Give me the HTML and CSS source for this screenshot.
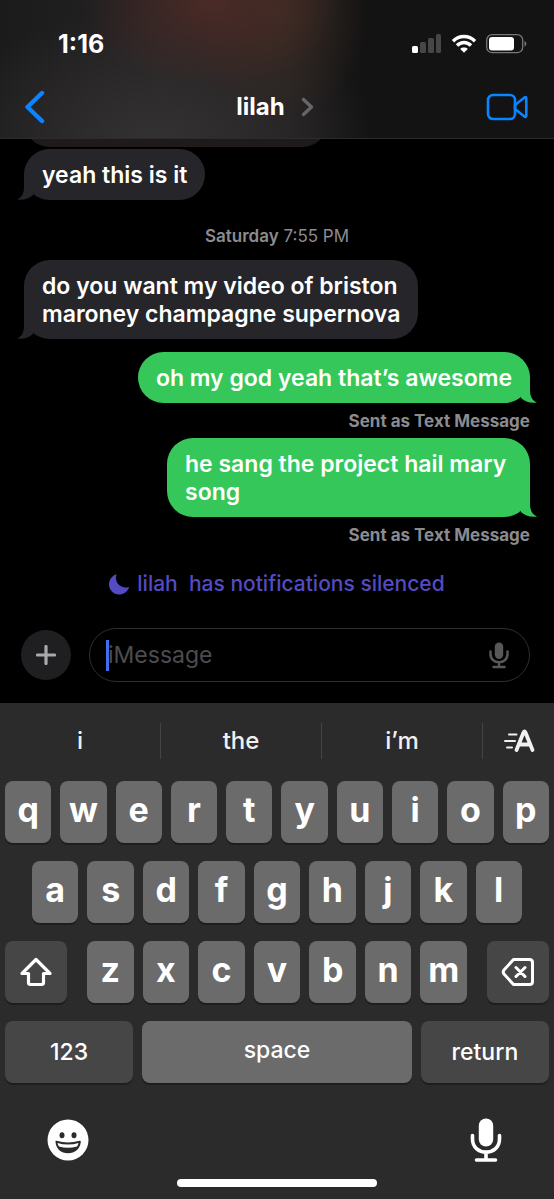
FILE: index.html
```
<!DOCTYPE html>
<html lang="en">
<head>
<meta charset="utf-8">
<meta name="viewport" content="width=device-width, initial-scale=1">
<title>lilah</title>
<link rel="stylesheet" href="styles.css">
</head>
<body>
<header class="header">
  <div class="status">
    <span class="clock">1:16</span>
    <div class="status-icons">
      <svg width="30" height="20" viewBox="0 0 30 20" aria-hidden="true">
        <rect x="0" y="12" width="6" height="7" rx="1.5" fill="#fff"/>
        <g fill="#464646"><rect x="8" y="8" width="6" height="11" rx="1.5"/><rect x="16" y="4" width="6" height="15" rx="1.5"/><rect x="24" y="0" width="5" height="19" rx="1.5"/></g>
      </svg>
      <svg width="26" height="20" viewBox="0 0 26 20" aria-hidden="true">
        <g fill="none" stroke="#fff" stroke-width="3.4"><path d="M2 7.2C8.2 .9 17.800 .9 24 7.200"/><path d="M6 11.500C10 7.500 16 7.500 20 11.500"/></g>
        <path d="M13 18.800L9.200 15C11.200 13.100 14.800 13.100 16.800 15Z" fill="#fff"/>
      </svg>
      <svg width="42" height="20" viewBox="0 0 42 20" aria-hidden="true">
        <rect x=".7" y=".7" width="36" height="18" rx="5.500" fill="none" stroke="#777" stroke-width="1.300"/>
        <rect x="3" y="3" width="25" height="13.500" rx="3" fill="#fff"/>
        <path d="M38.500 7C41 8 41 11.500 38.500 12.500Z" fill="#777"/>
      </svg>
    </div>
  </div>
  <nav class="navbar">
    <button class="plain back" aria-label="Back">
      <svg width="22" height="34" viewBox="0 0 22 34"><path d="M19 3L4.500 17L19 31" fill="none" stroke="#0a84ff" stroke-width="4.400" stroke-linecap="round" stroke-linejoin="round"/></svg>
    </button>
    <button class="plain contact">lilah
      <svg width="14" height="20" viewBox="0 0 14 20" aria-hidden="true"><path d="M2.500 2.500L10.500 10L2.500 17.500" fill="none" stroke="#666567" stroke-width="3.400" stroke-linecap="round" stroke-linejoin="round"/></svg>
    </button>
    <button class="plain video" aria-label="Video call">
      <svg width="42" height="28" viewBox="0 0 42 28"><g fill="none" stroke="#0a84ff" stroke-width="2.600" stroke-linejoin="round"><rect x="2" y="2" width="27" height="24" rx="5"/><path d="M29 12L38.500 4.500Q40.300 3.500 40.300 5.500V22.500Q40.300 24.500 38.500 23.500L29 16Z"/></g></svg>
    </button>
  </nav>
</header>

<main class="thread">
  <div class="bubble received clipped"></div>
  <div class="bubble received">yeah this is it
    <svg class="tail" viewBox="0 0 20 26" aria-hidden="true"><path d="M7 0V13C7 19 5 23.500 0 25.500C6 26.500 12 25 16 21L20 0Z"/></svg>
  </div>
  <time class="stamp"><b>Saturday</b> 7:55 PM</time>
  <div class="bubble received">do you want my video of briston<br>maroney champagne supernova
    <svg class="tail" viewBox="0 0 20 26" aria-hidden="true"><path d="M7 0V13C7 19 5 23.500 0 25.500C6 26.500 12 25 16 21L20 0Z"/></svg>
  </div>
  <div class="bubble sent">oh my god yeah that’s awesome
    <svg class="tail" viewBox="0 0 20 26" aria-hidden="true"><path d="M7 0V13C7 19 5 23.500 0 25.500C6 26.500 12 25 16 21L20 0Z"/></svg>
  </div>
  <p class="note">Sent as Text Message</p>
  <div class="bubble sent">he sang the project hail mary&nbsp;<br>song
    <svg class="tail" viewBox="0 0 20 26" aria-hidden="true"><path d="M7 0V13C7 19 5 23.500 0 25.500C6 26.500 12 25 16 21L20 0Z"/></svg>
  </div>
  <p class="note">Sent as Text Message</p>
  <p class="silenced">
    <svg width="20" height="21" viewBox="0 0 20 21" aria-hidden="true"><path d="M7.500 .8C5 8 11 15 19.300 13.200C20.500 13 20 14 19.500 14.800C17 19 13.500 20.500 10 20.500C4.500 20.500 0 16 0 10.500C0 6.500 2.500 2.500 6 .8C7 .3 7.700 .2 7.500 .8Z" fill="#544bc4"/></svg>
    <span>lilah&nbsp; has notifications silenced</span>
  </p>
</main>

<form class="composer">
  <button type="button" class="plus" aria-label="Add">
    <svg width="20" height="20" viewBox="0 0 20 20"><path d="M10 1.500V18.500M1.500 10H18.500" stroke="#a9a9ae" stroke-width="3.200" stroke-linecap="round"/></svg>
  </button>
  <div class="field">
    <span class="caret"></span>
    <input class="entry" type="text" placeholder="iMessage" aria-label="Message">
    <button type="button" class="plain" aria-label="Dictate">
      <svg width="20" height="27" viewBox="0 0 20 27"><rect x="5.800" y=".5" width="8.400" height="16.500" rx="4.200" fill="#58585b"/><path d="M1.500 9.500V12C1.500 23 18.500 23 18.500 12V9.500M10 20.500V25M4.500 25H15.500" fill="none" stroke="#58585b" stroke-width="2.500" stroke-linecap="round"/></svg>
    </button>
  </div>
</form>

<section class="keyboard" aria-label="Keyboard">
  <div class="suggestions">
    <button class="plain word">i</button>
    <button class="plain word">the</button>
    <button class="plain word">i’m</button>
    <button class="plain format" aria-label="Text effects">
      <svg width="32" height="24" viewBox="0 0 32 24"><g stroke="#f0f0f0" stroke-width="2" stroke-linecap="round"><path d="M6 5.500H13.500M2 12H12M4 18.500H9"/></g><path d="M13.500 21L20.500 3.500Q21.500 1.500 22.500 3.500L29.500 21M16.500 15.500H26.500" fill="none" stroke="#f0f0f0" stroke-width="3.800" stroke-linecap="round" stroke-linejoin="round"/></svg>
    </button>
  </div>
  <div class="keys">
    <div class="row"><button class="key">q</button><button class="key">w</button><button class="key">e</button><button class="key">r</button><button class="key">t</button><button class="key">y</button><button class="key">u</button><button class="key">i</button><button class="key">o</button><button class="key">p</button></div>
    <div class="row inset"><button class="key">a</button><button class="key">s</button><button class="key">d</button><button class="key">f</button><button class="key">g</button><button class="key">h</button><button class="key">j</button><button class="key">k</button><button class="key">l</button></div>
    <div class="row wide">
      <button class="key dark side" aria-label="Shift"><svg width="34" height="30" viewBox="0 0 34 30"><path d="M17 2.500L31 16.500H24.500V25.500Q24.500 27.500 22.500 27.500H11.500Q9.500 27.500 9.500 25.500V16.500H3Z" fill="none" stroke="#fff" stroke-width="3.200" stroke-linejoin="round"/></svg></button>
      <div class="row letters"><button class="key">z</button><button class="key">x</button><button class="key">c</button><button class="key">v</button><button class="key">b</button><button class="key">n</button><button class="key">m</button></div>
      <button class="key dark side" aria-label="Delete"><svg width="34" height="30" viewBox="0 0 34 30"><path d="M12.500 2.500H28.500Q31.500 2.500 31.500 5.500V24.500Q31.500 27.500 28.500 27.500H12.500L3 17Q1.500 15 3 13ZM15 10.500L24 19.500M24 10.500L15 19.500" fill="none" stroke="#fff" stroke-width="3" stroke-linejoin="round" stroke-linecap="round"/></svg></button>
    </div>
    <div class="row bottom"><button class="key dark label">123</button><button class="key label space">space</button><button class="key dark label">return</button></div>
  </div>
  <div class="dock">
    <button class="plain" aria-label="Emoji">
      <svg width="42" height="42" viewBox="0 0 42 42"><circle cx="21" cy="21" r="20.500" fill="#fff"/><g fill="#2b2b2b"><ellipse cx="15" cy="16.300" rx="2.500" ry="3"/><ellipse cx="27" cy="16.300" rx="2.500" ry="3"/><path d="M8.500 22.500Q8 21.500 9.500 21.700Q21 25.300 32.500 21.700Q34 21.500 33.800 23C33 30 28 34.300 21 34.300S9 30 8.500 22.500Z"/></g><path d="M10.500 24Q21 27 31.500 24Q31 26 30 27.500Q21 30 12 27.500Q11 26 10.500 24Z" fill="#fff"/></svg>
    </button>
    <button class="plain" aria-label="Dictation">
      <svg width="32" height="44" viewBox="0 0 32 44"><rect x="8.800" y=".5" width="14.400" height="28" rx="7.200" fill="#fff"/><path d="M2.500 17.500V21C2.500 38.500 29.500 38.500 29.500 21V17.500M16 35V42M6.500 42H25.500" fill="none" stroke="#fff" stroke-width="3.600" stroke-linecap="round"/></svg>
    </button>
  </div>
  <div class="home"></div>
</section>
</body>
</html>
```
FILE: styles.css
```
* { box-sizing: border-box; }

body {
  margin: 0;
  height: 100vh;
  display: flex;
  flex-direction: column;
  background: #000;
  color: #fff;
  font-family: Inter, "Liberation Sans", sans-serif;
  font-size: 23px;
}

button, input { font: inherit; color: inherit; }
p { margin: 0; }
svg { display: block; }

.plain {
  padding: 0;
  border: 0;
  background: none;
}

.header {
  flex: none;
  padding-bottom: 9px;
  border-bottom: 1px solid #2b2b2b;
  background:
    radial-gradient(ellipse 130px 90px at 38% 0, rgba(79, 43, 39, 0.9) 0%, rgba(79, 43, 39, 0) 100%),
    radial-gradient(ellipse 90px 110px at 50% 10%, rgba(62, 45, 36, 0.8) 0%, rgba(62, 45, 36, 0) 100%),
    radial-gradient(ellipse 220px 130px at 28% 100%, #333132 0%, rgba(48, 46, 47, 0) 100%),
    linear-gradient(90deg, #1c1b1c 0%, #242222 30%, #211e1e 52%, #131313 66%, #131313 100%);
}

.status {
  display: flex;
  justify-content: space-between;
  align-items: center;
  padding: 28px 26px 0 58px;
}

.clock {
  font-size: 25px;
  line-height: 32px;
  font-weight: 700;
}

.status-icons {
  display: flex;
  align-items: center;
  gap: 9px;
}

.navbar {
  display: grid;
  grid-template-columns: 1fr auto 1fr;
  align-items: center;
  padding: 24px 26px 0 23px;
  height: 69px;
}

.back { justify-self: start; }
.video { justify-self: end; }

.contact {
  display: flex;
  align-items: center;
  gap: 16px;
  font-size: 24px;
  font-weight: 700;
  line-height: 32px;
}

.thread {
  flex: 1;
  min-height: 0;
  overflow: hidden;
  display: flex;
  flex-direction: column;
  justify-content: flex-end;
  padding: 0 24px;
}

.bubble {
  position: relative;
  flex: none;
  padding: 12px 18px 11px;
  border-radius: 26px;
  line-height: 28px;
  font-weight: 600;
}

.received {
  align-self: flex-start;
  background: #26252a;
  fill: #26252a;
}

.sent {
  align-self: flex-end;
  background: #35c759;
  fill: #35c759;
}

.clipped {
  width: 60%;
  height: 52px;
  margin-bottom: 2px;
  background: #211a1b;
}

.tail {
  position: absolute;
  bottom: 0;
  left: -7px;
  width: 20px;
  height: 26px;
}

.sent .tail {
  left: auto;
  right: -7px;
  transform: scaleX(-1);
}

.stamp {
  align-self: center;
  padding: 24px 0 12px;
  line-height: 24px;
  font-size: 17px;
  color: #8b8b90;
}

.stamp b { font-weight: 600; }
.received + .sent { margin-top: 13px; }

.note {
  align-self: flex-end;
  padding: 6px 0 5px;
  line-height: 24px;
  font-size: 17px;
  font-weight: 700;
  color: #8b8b90;
}

.silenced {
  align-self: center;
  display: flex;
  align-items: center;
  gap: 8px;
  padding: 18px 0 30px;
  line-height: 28px;
  font-size: 21px;
  font-weight: 500;
  color: #544bc4;
}

.composer {
  flex: none;
  display: flex;
  align-items: center;
  gap: 18px;
  padding: 0 24px 21px 21px;
}

.plus {
  flex: none;
  display: grid;
  place-items: center;
  width: 50px;
  height: 50px;
  padding: 0;
  border: 0;
  border-radius: 50%;
  background: #1f1f22;
}

.field {
  position: relative;
  flex: 1;
  display: flex;
  align-items: center;
  height: 54px;
  padding: 0 20px 0 18px;
  border: 1px solid #2e2e30;
  border-radius: 27px;
}

.caret {
  position: absolute;
  left: 16px;
  width: 3px;
  height: 31px;
  background: #3f6ef0;
}

.entry {
  flex: 1;
  min-width: 0;
  padding: 0;
  border: 0;
  outline: 0;
  background: none;
}

.entry::placeholder { color: #4c4c4f; opacity: 1; }

.keyboard {
  flex: none;
  background: #2b2b2b;
}

.suggestions {
  display: flex;
  align-items: center;
  height: 78px;
  padding-bottom: 2px;
}

.word {
  flex: 1;
  height: 36px;
  padding-bottom: 2px;
  border-right: 1px solid #444;
  font-size: 24px;
  font-weight: 500;
  color: #f0f0f0;
}

.format {
  flex: none;
  width: 71px;
  display: grid;
  place-items: center;
}

.keys {
  display: flex;
  flex-direction: column;
  gap: 18px;
}

.row {
  display: flex;
  gap: 9px;
  padding: 0 5px;
}

.inset { padding: 0 32px; }
.wide { gap: 20px; }
.letters { flex: 1; padding: 0; }

.key {
  flex: 1;
  min-width: 0;
  height: 62px;
  display: flex;
  align-items: center;
  justify-content: center;
  padding: 0 0 6px;
  border: 0;
  border-radius: 8px;
  background: #6b6b6b;
  box-shadow: 0 2px 0 #1e1e1e;
  font-size: 34px;
  font-weight: 700;
}

.dark {
  padding: 0;
  background: #464646;
}

.side { flex: none; width: 62px; }

.label {
  flex: 128;
  font-size: 23px;
  font-weight: 500;
}

.space { flex-grow: 269; padding-bottom: 4px; }

.dock {
  display: flex;
  align-items: center;
  justify-content: space-between;
  padding: 35px 52px 17px 47px;
}

.home {
  width: 36%;
  height: 8px;
  margin: 0 auto 12px;
  border-radius: 4px;
  background: #fff;
}
```
